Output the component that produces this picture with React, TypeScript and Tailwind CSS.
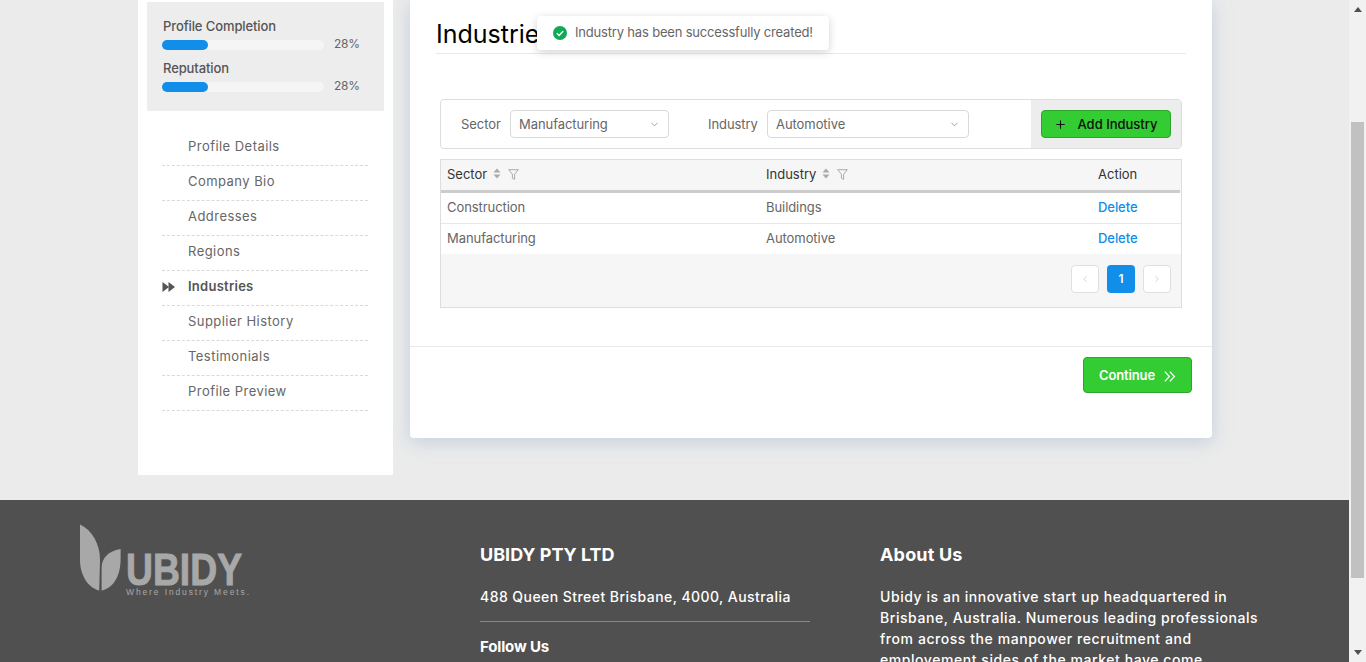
import { ChevronDown, ChevronLeft, ChevronRight, Plus } from "lucide-react";

const font = "[font-family:Inter,'Liberation_Sans',sans-serif]";

const navItems = [
  "Profile Details",
  "Company Bio",
  "Addresses",
  "Regions",
  "Industries",
  "Supplier History",
  "Testimonials",
  "Profile Preview",
];

const rows = [
  { sector: "Construction", industry: "Buildings" },
  { sector: "Manufacturing", industry: "Automotive" },
];

const Progress = ({ label }: { label: string }) => (
  <div className="h-[42px]">
    <div className="h-[17px] pl-px text-[13px] leading-[17px] font-medium tracking-[-0.008em] text-[#555]">{label}</div>
    <div className="mt-[5px] flex h-[10px] items-center">
      <div className="h-[10px] w-[162px] rounded-full bg-[#f5f5f5]">
        <div className="h-full w-[46px] rounded-full bg-[#108ee9]" />
      </div>
      <span className="ml-[10px] -mt-[2px] text-[12px] tracking-[-0.02em] text-[#666]">28%</span>
    </div>
  </div>
);

const Sort = () => (
  <svg width="8" height="11" viewBox="0 0 8 11" className="-mt-[3px] text-[#aaa]" fill="currentColor">
    <path d="M4 0.5 7.5 4.5H0.5Z" />
    <path d="M4 10.5 0.5 6.5H7.5Z" />
  </svg>
);

const Funnel = () => (
  <svg width="11" height="11" viewBox="0 0 11 11" fill="none" stroke="#aaa" strokeWidth="1" className="-mt-[2px] ml-px">
    <path d="M0.7 0.7H10.3L6.6 5.2V10.4L4.4 9.2V5.2Z" />
  </svg>
);

const Select = ({ value, className }: { value: string; className: string }) => (
  <div className={`flex h-[28px] items-center justify-between rounded-[4px] border border-[#d9d9d9] bg-white pr-[8px] pl-[8px] text-[13px] tracking-[-0.005em] text-[#666] ${className}`}>
    <span className="pt-px">{value}</span>
    <ChevronDown size={11} className="text-[#999]" />
  </div>
);

const Logo = () => (
  <svg width="172" height="78" viewBox="0 0 172 78" fill="#a8a8a8">
    <path d="M0 4.5C12 10 20 24 20 40L19.2 70.5C8 68 0 55 0 40Z" />
    <path d="M21.6 70.5C34 68 40.6 55 40.6 39V29C28 31 22 38 21.6 47Z" />
    <text x="46" y="65" fontFamily="'Liberation Sans', sans-serif" fontWeight="700" fontSize="45" stroke="#a8a8a8" strokeWidth="1" textLength="116" lengthAdjust="spacingAndGlyphs">UBIDY</text>
    <text x="46" y="74.5" fontFamily="'Liberation Sans', sans-serif" fontSize="8.5" textLength="123" lengthAdjust="spacing">Where Industry Meets.</text>
  </svg>
);

export default function App() {
  return (
    <div className={`flex h-[662px] overflow-hidden bg-[#ebebeb] ${font}`}>
      <div className="w-[1349px] shrink-0">
        <div className="flex h-[500px] items-start gap-[17px] pl-[138px]">
          <aside className="h-[475px] w-[255px] bg-white px-[9px] pt-[2px]">
            <div className="h-[109px] bg-[#ededed] px-[15px] pt-[16px]">
              <Progress label="Profile Completion" />
              <Progress label="Reputation" />
            </div>
            <nav className="mt-[20px] mr-[16px] ml-[15px]">
              {navItems.map((item) => (
                <div key={item} className="flex h-[35px] items-center border-b border-dashed border-[#d9d9d9] pb-[3px] text-[13px] tracking-[0.035em]">
                  {item === "Industries" ? (
                    <>
                      <svg width="14" height="10" viewBox="0 0 14 10" fill="#555" className="mr-[12px]">
                        <path d="M0.5 0 7 5 0.5 10Z" />
                        <path d="M6.5 0 13 5 6.5 10Z" />
                      </svg>
                      <span className="font-semibold tracking-[0.02em] text-[#555]">{item}</span>
                    </>
                  ) : (
                    <span className="pl-[26px] text-[#666]">{item}</span>
                  )}
                </div>
              ))}
            </nav>
          </aside>

          <main className="relative h-[438px] w-[802px] rounded-b-[4px] bg-white shadow-[0_4px_18px_rgba(170,190,210,0.6)]">
            <div className="mx-[26px] h-[54px] border-b border-[#e8e8e8] pt-[16px] text-[25px] leading-[36px] text-black">Industries</div>

            <div className="absolute top-[16px] left-[127px] flex h-[34px] w-[292px] items-center rounded-[4px] bg-white pl-[16px] text-[13px] tracking-[-0.014em] whitespace-nowrap text-[#666] shadow-[0_2px_8px_rgba(0,0,0,0.18)]">
              <svg width="14" height="14" viewBox="0 0 14 14" className="mr-[8px]">
                <circle cx="7" cy="7" r="7" fill="#0fa958" />
                <path d="M3.8 7.2 6.1 9.4 10.2 5" fill="none" stroke="#fff" strokeWidth="1.4" />
              </svg>
              Industry has been successfully created!
            </div>

            <div className="mx-[30px] mt-[45px] flex h-[50px] rounded-[4px] border border-[#ddd]">
              <div className="flex flex-1 items-center text-[13px] tracking-[-0.005em] text-[#666]">
                <span className="ml-[20px] w-[49px] pt-px">Sector</span>
                <Select value="Manufacturing" className="w-[159px]" />
                <span className="ml-[39px] w-[59px] pt-px">Industry</span>
                <Select value="Automotive" className="w-[202px]" />
              </div>
              <div className="flex w-[150px] items-center justify-center bg-[#ededed]">
                <button className="flex h-[28px] w-[130px] items-center justify-center gap-[10px] rounded-[4px] border border-[#2ca52c] bg-[#33cc33] pt-px text-[13px] font-medium text-[#111]">
                  <Plus size={13} />
                  Add Industry
                </button>
              </div>
            </div>

            <div className="mx-[30px] mt-[10px] h-[149px] border border-[#ddd] bg-[#f6f6f6] text-[13px]">
              <div className="flex h-[33px] w-[739px] items-center border-b-[3px] border-[#ccc] text-[#333]">
                <div className="flex w-[325px] items-center gap-[6px] pl-[6px]">Sector <Sort /><Funnel /></div>
                <div className="flex w-[332px] items-center gap-[6px]">Industry <Sort /><Funnel /></div>
                <div>Action</div>
              </div>
              {rows.map((row, i) => (
                <div key={row.sector} className={`flex items-center bg-white tracking-[-0.005em] text-[#666] ${i === 0 ? "h-[31px] border-b border-[#e8e8e8]" : "h-[30px]"}`}>
                  <div className="w-[325px] pl-[6px]">{row.sector}</div>
                  <div className="w-[332px]">{row.industry}</div>
                  <div className="font-medium text-[#108ee9]">Delete</div>
                </div>
              ))}
              <div className="flex justify-end gap-[8px] pt-[11px] pr-[10px]">
                <div className="flex h-[28px] w-[28px] items-center justify-center rounded-[4px] border border-[#e0e0e0] bg-white text-[#ccc]"><ChevronLeft size={10} /></div>
                <div className="flex h-[28px] w-[28px] items-center justify-center rounded-[4px] bg-[#108ee9] text-[12px] font-semibold text-white">1</div>
                <div className="flex h-[28px] w-[28px] items-center justify-center rounded-[4px] border border-[#e0e0e0] bg-white text-[#ccc]"><ChevronRight size={10} /></div>
              </div>
            </div>

            <div className="mt-[38px] flex justify-end border-t border-[#e8e8e8] pt-[10px] pr-[20px]">
              <button className="flex h-[36px] w-[109px] items-center justify-center gap-[9px] rounded-[4px] border border-[#2ca52c] bg-[#33cc33] pt-[2px] text-[13px] font-semibold tracking-[-0.01em] text-white">
                Continue
                <svg width="12" height="11" viewBox="0 0 12 11" fill="none" stroke="currentColor" strokeWidth="1.3">
                  <path d="M0.8 0.6 5.4 5.5 0.8 10.4" />
                  <path d="M5.8 0.6 10.4 5.5 5.8 10.4" />
                </svg>
              </button>
            </div>
          </main>
        </div>

        <footer className="grid h-[162px] grid-cols-[400px_400px_400px] bg-[#505050] pt-[20px] pl-[80px] text-white">
          <div><Logo /></div>
          <div className="w-[330px] pt-[23px]">
            <h3 className="text-[18px] leading-[24px] font-bold">UBIDY PTY LTD</h3>
            <p className="mt-[19px] text-[14px] leading-[21px] font-medium tracking-[0.032em]">488 Queen Street Brisbane, 4000, Australia</p>
            <hr className="mt-[14px] border-[#8a8a8a]" />
            <h4 className="mt-[15px] text-[15px] leading-[20px] font-bold tracking-[-0.01em]">Follow Us</h4>
          </div>
          <div className="w-[390px] pt-[23px]">
            <h3 className="text-[18px] leading-[24px] font-bold tracking-[0.01em]">About Us</h3>
            <p className="mt-[19px] text-[14px] leading-[21px] font-medium tracking-[0.04em]">
              Ubidy is an innovative start up headquartered in Brisbane, Australia. Numerous leading professionals from across the manpower recruitment and employement sides of the market have come
            </p>
          </div>
        </footer>
      </div>

      <div className="flex w-[17px] shrink-0 flex-col items-center bg-[#f1f1f1]">
        <svg width="8" height="5" viewBox="0 0 8 5" fill="#505050" className="mt-[7px]"><path d="M4 0 8 5H0Z" /></svg>
        <div className="mt-[110px] h-[456px] w-[13px] bg-[#c1c1c1]" />
        <svg width="8" height="5" viewBox="0 0 8 5" fill="#505050" className="mt-[72px]"><path d="M0 0H8L4 5Z" /></svg>
      </div>
    </div>
  );
}
